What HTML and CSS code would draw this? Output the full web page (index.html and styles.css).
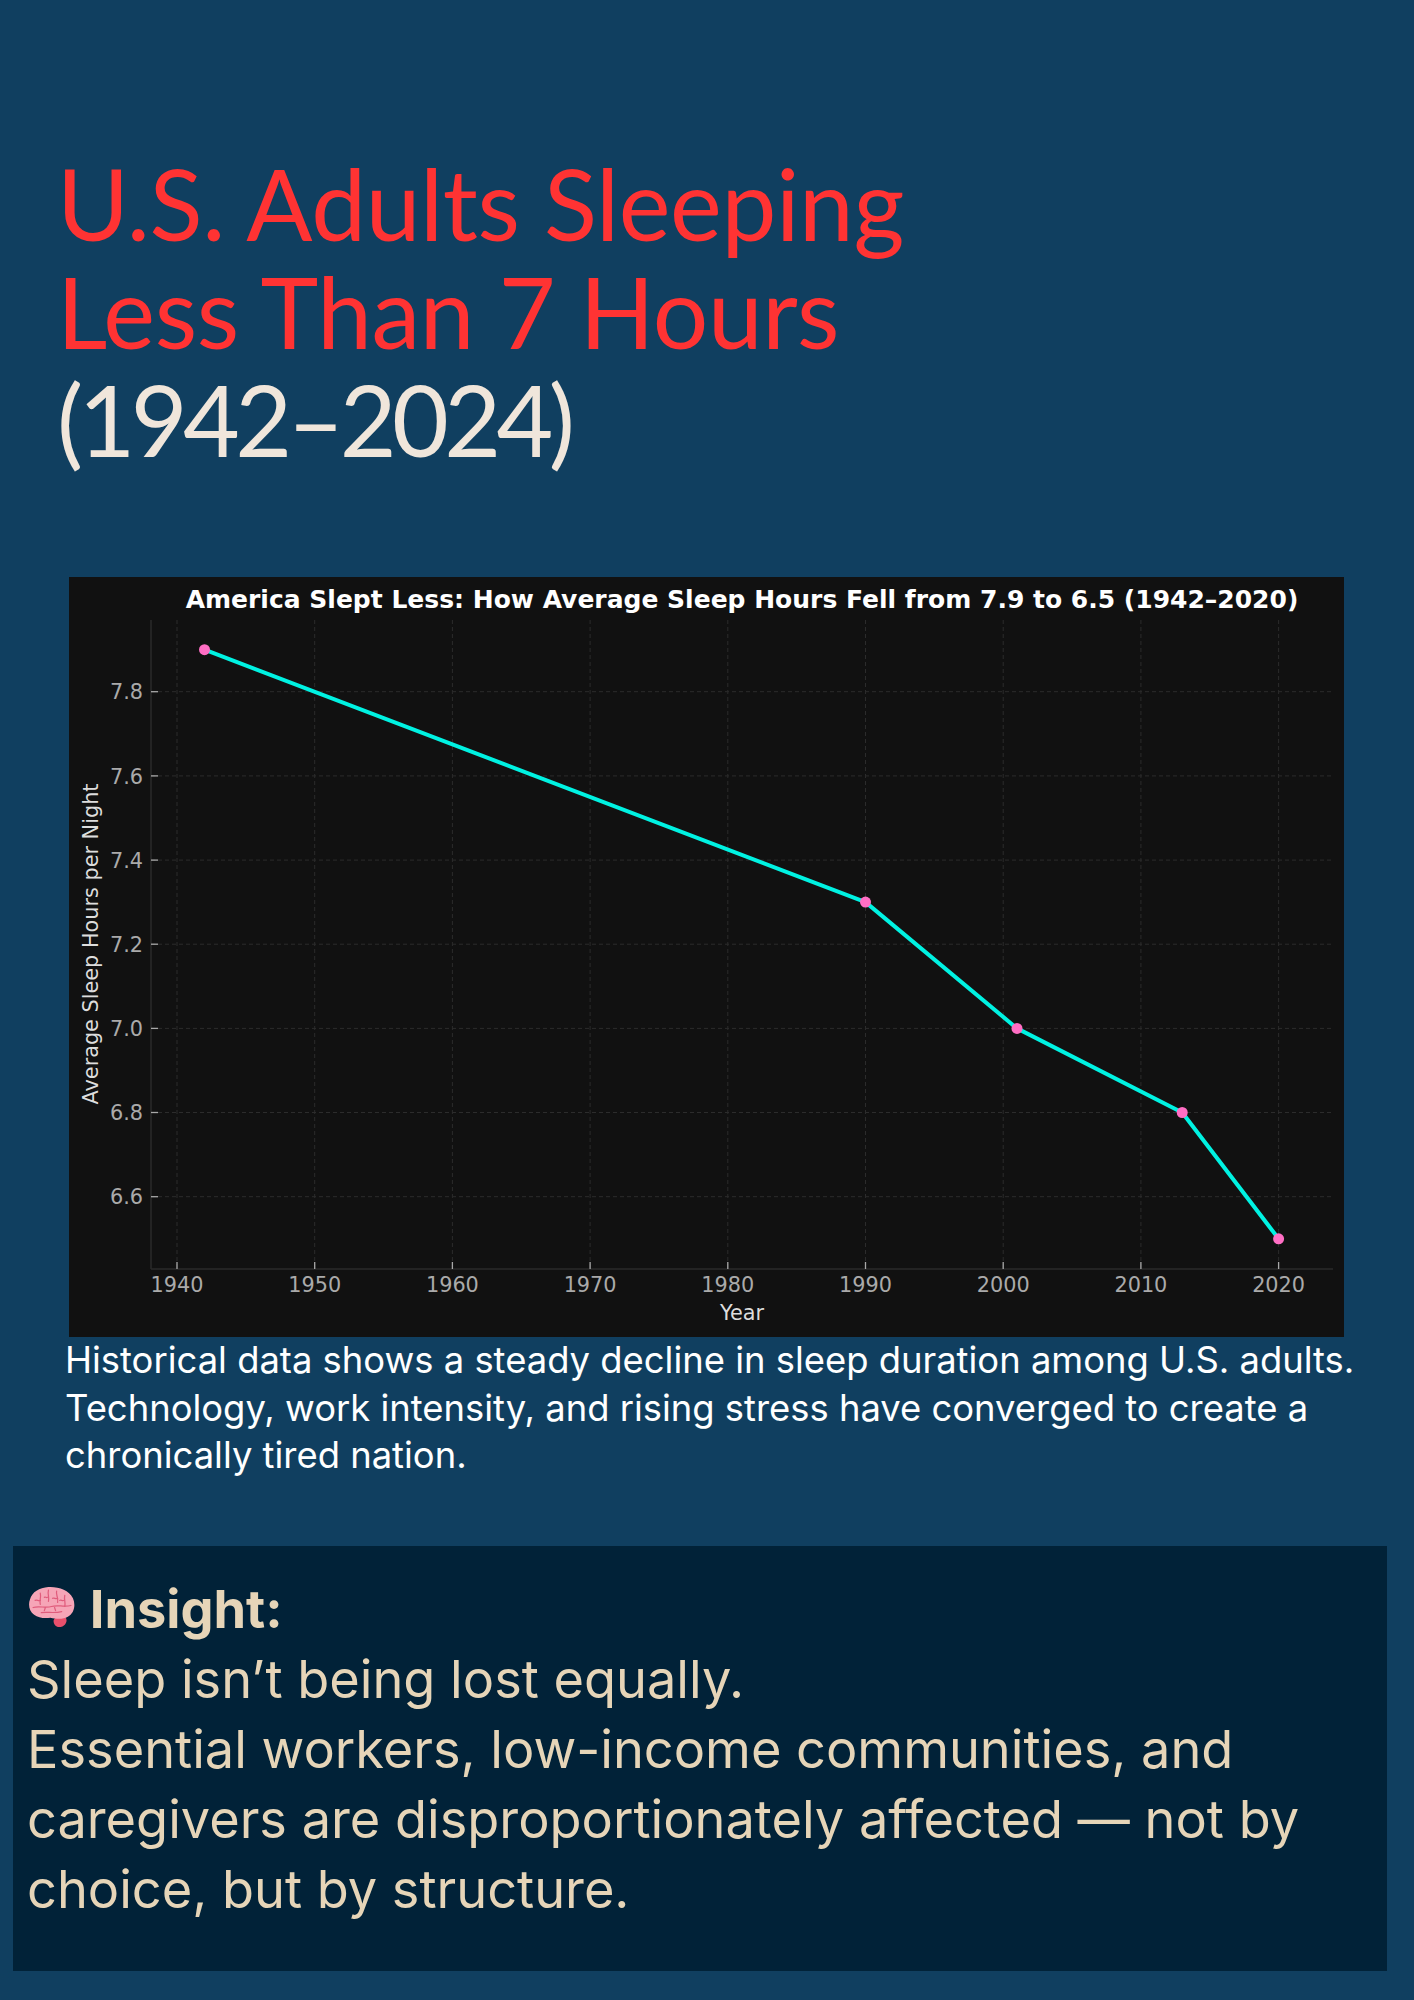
FILE: index.html
```html
<!DOCTYPE html>
<html lang="en">
<head>
<meta charset="utf-8">
<title>U.S. Adults Sleeping Less Than 7 Hours</title>
<link rel="stylesheet" href="styles.css">
</head>
<body>
<div class="page">
  <header class="hero">
    <h1 class="title"><span class="title-red">U.S. Adults Sleeping<br>Less Than 7 Hours</span><br><span class="title-years">(1942–2024)</span></h1>
  </header>

  <section class="chart-section">
    <figure class="chart">
      <svg class="chart-svg" width="1275" height="760" viewBox="0 0 1275 760" xmlns="http://www.w3.org/2000/svg">
        <rect x="0" y="0" width="1275" height="760" fill="#111111"/>
        <g class="grid" stroke="#2c2c2c" stroke-width="1" stroke-dasharray="4 3">
          <line x1="108" y1="43" x2="108" y2="692"/>
          <line x1="245.7" y1="43" x2="245.7" y2="692"/>
          <line x1="383.4" y1="43" x2="383.4" y2="692"/>
          <line x1="521.1" y1="43" x2="521.1" y2="692"/>
          <line x1="658.8" y1="43" x2="658.8" y2="692"/>
          <line x1="796.5" y1="43" x2="796.5" y2="692"/>
          <line x1="934.2" y1="43" x2="934.2" y2="692"/>
          <line x1="1071.9" y1="43" x2="1071.9" y2="692"/>
          <line x1="1209.6" y1="43" x2="1209.6" y2="692"/>
          <line x1="82" y1="619.7" x2="1264" y2="619.7"/>
          <line x1="82" y1="535.5" x2="1264" y2="535.5"/>
          <line x1="82" y1="451.4" x2="1264" y2="451.4"/>
          <line x1="82" y1="367.2" x2="1264" y2="367.2"/>
          <line x1="82" y1="283.1" x2="1264" y2="283.1"/>
          <line x1="82" y1="198.9" x2="1264" y2="198.9"/>
          <line x1="82" y1="114.7" x2="1264" y2="114.7"/>
        </g>
        <g class="spines" stroke="#2a2a2a" stroke-width="1.5">
          <line x1="82" y1="43" x2="82" y2="692"/>
          <line x1="82" y1="692" x2="1264" y2="692"/>
        </g>
        <g class="ticks" stroke="#a8a8a8" stroke-width="1.3">
          <line x1="108" y1="685" x2="108" y2="692"/>
          <line x1="245.7" y1="685" x2="245.7" y2="692"/>
          <line x1="383.4" y1="685" x2="383.4" y2="692"/>
          <line x1="521.1" y1="685" x2="521.1" y2="692"/>
          <line x1="658.8" y1="685" x2="658.8" y2="692"/>
          <line x1="796.5" y1="685" x2="796.5" y2="692"/>
          <line x1="934.2" y1="685" x2="934.2" y2="692"/>
          <line x1="1071.9" y1="685" x2="1071.9" y2="692"/>
          <line x1="1209.6" y1="685" x2="1209.6" y2="692"/>
          <line x1="82" y1="619.7" x2="89" y2="619.7"/>
          <line x1="82" y1="535.5" x2="89" y2="535.5"/>
          <line x1="82" y1="451.4" x2="89" y2="451.4"/>
          <line x1="82" y1="367.2" x2="89" y2="367.2"/>
          <line x1="82" y1="283.1" x2="89" y2="283.1"/>
          <line x1="82" y1="198.9" x2="89" y2="198.9"/>
          <line x1="82" y1="114.7" x2="89" y2="114.7"/>
        </g>
        <g class="tick-labels y-labels">
          <text x="74" y="627">6.6</text>
          <text x="74" y="543">6.8</text>
          <text x="74" y="459">7.0</text>
          <text x="74" y="375">7.2</text>
          <text x="74" y="290.5">7.4</text>
          <text x="74" y="206.5">7.6</text>
          <text x="74" y="122">7.8</text>
        </g>
        <g class="tick-labels x-labels">
          <text x="108" y="715">1940</text>
          <text x="245.7" y="715">1950</text>
          <text x="383.4" y="715">1960</text>
          <text x="521.1" y="715">1970</text>
          <text x="658.8" y="715">1980</text>
          <text x="796.5" y="715">1990</text>
          <text x="934.2" y="715">2000</text>
          <text x="1071.9" y="715">2010</text>
          <text x="1209.6" y="715">2020</text>
        </g>
        <text class="axis-label" x="673" y="743">Year</text>
        <text class="axis-label" transform="translate(29 367) rotate(-90)" x="0" y="0">Average Sleep Hours per Night</text>
        <text class="chart-title" x="673" y="31.3">America Slept Less: How Average Sleep Hours Fell from 7.9 to 6.5 (1942–2020)</text>
        <polyline points="135.5,72.7 796.5,325.1 948,451.4 1113.2,535.5 1209.6,661.8" fill="none" stroke="#00f2e2" stroke-width="4" stroke-linejoin="round" stroke-linecap="round"/>
        <g class="markers" fill="#ff6ec4">
          <circle cx="135.5" cy="72.7" r="5.5"/>
          <circle cx="796.5" cy="325.1" r="5.5"/>
          <circle cx="948" cy="451.4" r="5.5"/>
          <circle cx="1113.2" cy="535.5" r="5.5"/>
          <circle cx="1209.6" cy="661.8" r="5.5"/>
        </g>
      </svg>
    </figure>
    <p class="caption">Historical data shows a steady decline in sleep duration among U.S. adults. Technology, work intensity, and rising stress have converged to create a chronically tired nation.</p>
  </section>

  <section class="insight">
    <p class="insight-head"><svg class="brain" width="47" height="42" viewBox="0 0 46 41" xmlns="http://www.w3.org/2000/svg" aria-hidden="true">
        <path d="M25 34 C26 29 34 28 37 31 C39 34 37 39 32 40 C28 41 25 38 25 34 Z" fill="#e8506c"/>
        <path d="M6 28 C1 25 0 18 2 13 C4 6 11 1.5 20 1 C30 0.5 40 4 44 12 C47 19 45 27 39 30 C34 33 27 32 22 31 C16 32 10 31 6 28 Z" fill="#f6a5b7"/>
        <g fill="none" stroke="#e05c7c" stroke-width="1.2" stroke-linecap="round">
          <path d="M12 7 C13 11 11 14 12 18"/>
          <path d="M20 4 C19 8 21 11 20 15"/>
          <path d="M28 5 C27 9 30 11 29 16"/>
          <path d="M36 9 C35 13 37 16 36 20"/>
          <path d="M5 21 C11 19 17 22 23 20 C29 18 35 21 42 19"/>
          <path d="M13 26 C19 25 25 27 33 25"/>
          <path d="M7 14 C9 13 10 15 12 14"/>
          <path d="M24 12 C26 11 27 13 29 12"/>
          <path d="M16 11 C17 10 18 12 19 11"/>
          <path d="M31 14 C32 13 34 15 35 14"/>
          <path d="M26 21 L27 24"/>
          <path d="M17 21 L16 24"/>
        </g>
      </svg> <strong>Insight:</strong></p>
    <p class="insight-body">Sleep isn’t being lost equally.<br>Essential workers, low-income communities, and caregivers are disproportionately affected — not by choice, but by structure.</p>
  </section>
</div>
</body>
</html>
```

FILE: styles.css
```css
html, body {
  margin: 0;
  padding: 0;
}

body {
  background: #103f60;
  width: 1414px;
  min-height: 2000px;
  font-family: Inter, "Noto Sans", "Liberation Sans", sans-serif;
}

.page {
  padding: 149px 27px 32px 13px;
}

.hero {
  padding-left: 44px;
}

.title {
  margin: 0;
  font-family: Lato, "Open Sans", "Liberation Sans", sans-serif;
  font-weight: 400;
  font-size: 98px;
  line-height: 108px;
}

.title-red {
  color: #ff3333;
  letter-spacing: -0.4px;
}

.title-years {
  color: #f0e6db;
  letter-spacing: -4.6px;
}

.chart-section {
  margin-top: 104px;
}

.chart {
  margin: 0 0 0 56px;
  width: 1275px;
  height: 760px;
}

.chart-svg {
  display: block;
}

.chart-svg text {
  font-family: "DejaVu Sans", sans-serif;
}

.tick-labels {
  font-size: 20.8px;
  fill: #aaaaaa;
}

.y-labels {
  text-anchor: end;
}

.x-labels {
  text-anchor: middle;
}

.axis-label {
  font-size: 20.8px;
  fill: #dddddd;
  text-anchor: middle;
}

.chart-title {
  font-size: 25px;
  font-weight: 700;
  fill: #ffffff;
  text-anchor: middle;
}

.caption {
  margin: 0;
  padding-left: 52px;
  color: #ffffff;
  font-size: 36.4px;
  line-height: 47.5px;
  font-weight: 400;
}

.insight {
  margin-top: 66px;
  background: #012238;
  padding: 28px 16px 47px 14px;
  color: #e6d5b8;
  font-size: 52.3px;
  line-height: 70px;
}

.insight p {
  margin: 0;
}

.insight-head strong {
  font-weight: 700;
}

.brain {
  vertical-align: baseline;
  margin-left: 1px;
}
```
